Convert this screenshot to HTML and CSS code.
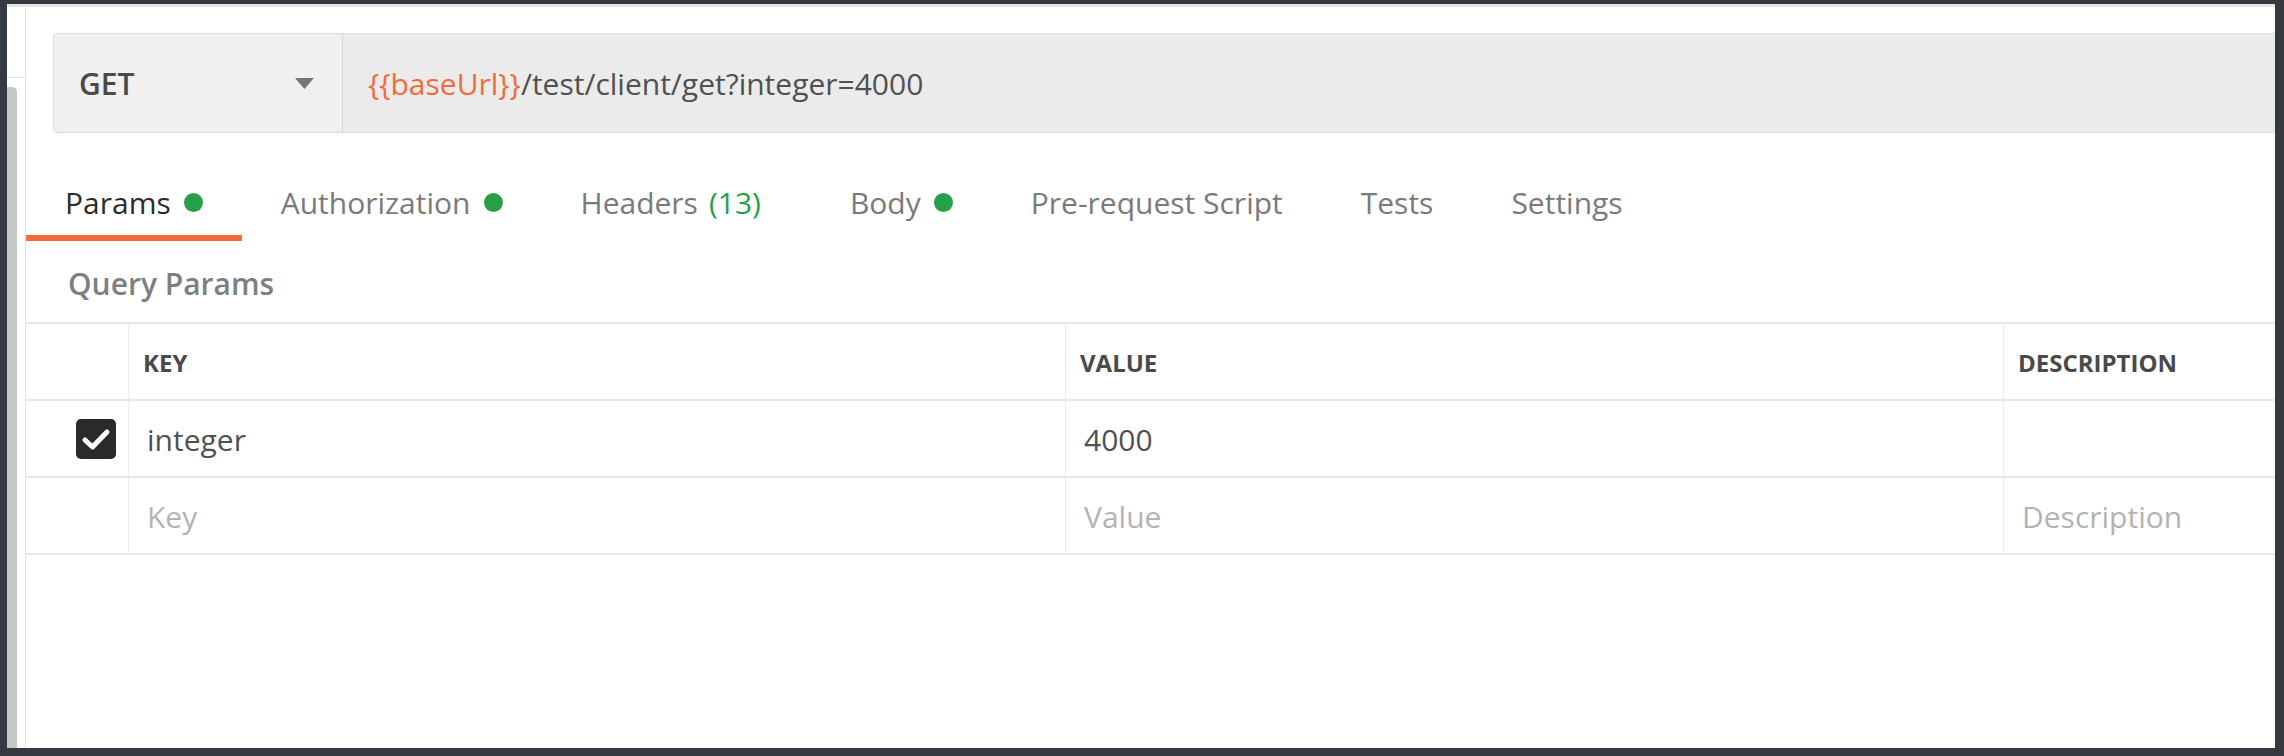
FILE: index.html
```html
<!DOCTYPE html>
<html lang="en">
<head>
    <meta charset="UTF-8">
    <title>Request - Params</title>
    <link rel="stylesheet" href="styles.css">
</head>
<body>
    <div class="app">
        <div class="sidebar">
            <div class="sidebar-head"></div>
            <div class="scroll-thumb"></div>
        </div>

        <div class="main">
            <div class="url-bar">
                <div class="method">
                    <span class="method-name">GET</span>
                    <svg class="caret" width="19" height="11" viewBox="0 0 19 11"><path d="M0 0 H19 L9.5 11 Z" fill="#757575"/></svg>
                </div>
                <div class="url"><span class="var">{{baseUrl}}</span>/test/client/get?integer=4000</div>
            </div>

            <div class="tabs">
                <div class="tab active">Params<span class="dot"></span></div>
                <div class="tab">Authorization<span class="dot"></span></div>
                <div class="tab">Headers<span class="count">(13)</span></div>
                <div class="tab">Body<span class="dot"></span></div>
                <div class="tab">Pre-request Script</div>
                <div class="tab">Tests</div>
                <div class="tab">Settings</div>
            </div>

            <div class="section-title">Query Params</div>

            <div class="params-table">
                <div class="row head">
                    <div class="cell check"></div>
                    <div class="cell">KEY</div>
                    <div class="cell">VALUE</div>
                    <div class="cell">DESCRIPTION</div>
                </div>
                <div class="row">
                    <div class="cell check">
                        <span class="checkbox">
                            <svg width="40" height="40" viewBox="0 0 40 40"><path d="M9 21 L16.5 28 L31 13" fill="none" stroke="#fff" stroke-width="5" stroke-linecap="round" stroke-linejoin="round"/></svg>
                        </span>
                    </div>
                    <div class="cell value">integer</div>
                    <div class="cell value">4000</div>
                    <div class="cell value"></div>
                </div>
                <div class="row">
                    <div class="cell check"></div>
                    <div class="cell value placeholder">Key</div>
                    <div class="cell value placeholder">Value</div>
                    <div class="cell value placeholder">Description</div>
                </div>
            </div>
        </div>
    </div>
</body>
</html>
```

FILE: styles.css
```css
:root {
    --frame: #343a3f;
    --line: #e8e8e8;
    --text: #505050;
    --muted: #7a7a7a;
    --orange: #f26b3a;
    --green: #26a047;
}

* {
    box-sizing: border-box;
    margin: 0;
    padding: 0;
}

body {
    width: 2284px;
    height: 756px;
    overflow: hidden;
    background: var(--frame);
    padding: 4px 9px 8px 7px;
    font-family: "Open Sans", "Noto Sans", sans-serif;
    color: var(--text);
}

.app {
    display: flex;
    height: 100%;
    background: #fff;
    border-top: 3px solid #e4e4e4;
}

.sidebar {
    width: 19px;
    display: flex;
    flex-direction: column;
    border-right: 1px solid #e2e2e2;
}

.sidebar-head {
    height: 71px;
    border-bottom: 1px solid #e0e0e0;
}

.scroll-thumb {
    flex: 1;
    width: 10px;
    margin-top: 9px;
    background: #c6c6c6;
    border-radius: 0 5px 0 0;
}

.main {
    flex: 1;
    display: flex;
    flex-direction: column;
    min-width: 0;
}

/* url bar */
.url-bar {
    display: flex;
    height: 100px;
    margin: 26px 0 0 27px;
    background: #ebebeb;
    border: 1px solid #dcdcdc;
    border-right: none;
    border-radius: 5px 0 0 5px;
}

.method {
    width: 289px;
    display: flex;
    align-items: center;
    justify-content: space-between;
    padding: 0 28px 0 25px;
    background: #f0f0f0;
    border-right: 1px solid #d6d6d6;
    border-radius: 5px 0 0 5px;
}

.method-name {
    font-size: 30px;
    font-weight: 600;
    color: #4a4a4a;
}

.url {
    display: flex;
    align-items: center;
    padding-left: 25px;
    font-size: 30px;
    color: var(--text);
}

.url .var {
    color: var(--orange);
}

/* tabs */
.tabs {
    display: flex;
    margin-top: 33px;
}

.tab {
    display: flex;
    align-items: center;
    height: 75px;
    padding: 3px 39px 0;
    font-size: 30px;
    color: var(--muted);
    border-bottom: 6px solid transparent;
}

.tab.active {
    color: #2b2b2b;
    border-bottom-color: var(--orange);
}

.dot {
    width: 19px;
    height: 19px;
    margin-left: 13px;
    border-radius: 50%;
    background: var(--green);
}

.count {
    margin: 0 11px;
    color: var(--green);
}

.section-title {
    margin: 23px 0 18px 42px;
    font-size: 30px;
    font-weight: 600;
    line-height: 40px;
    color: #7f7f7f;
}

/* params table */
.params-table {
    border-top: 2px solid var(--line);
}

.row {
    display: grid;
    grid-template-columns: 102px 937px 938px 1fr;
    height: 77px;
    border-bottom: 2px solid var(--line);
}

.cell {
    display: flex;
    align-items: center;
    padding: 2px 0 0 14px;
    border-left: 1px solid #ececec;
}

.head .cell {
    font-size: 24px;
    font-weight: 700;
    color: #4a4a4a;
}

.cell.check {
    border-left: none;
    justify-content: flex-end;
    padding: 0 12px 0 0;
}

.cell.value {
    padding-left: 18px;
    font-size: 30px;
    color: var(--text);
}

.cell.placeholder {
    color: #b3b3b3;
}

.checkbox {
    width: 40px;
    height: 40px;
    border-radius: 5px;
    background: #2a2a2a;
}

.checkbox svg {
    display: block;
}
```
